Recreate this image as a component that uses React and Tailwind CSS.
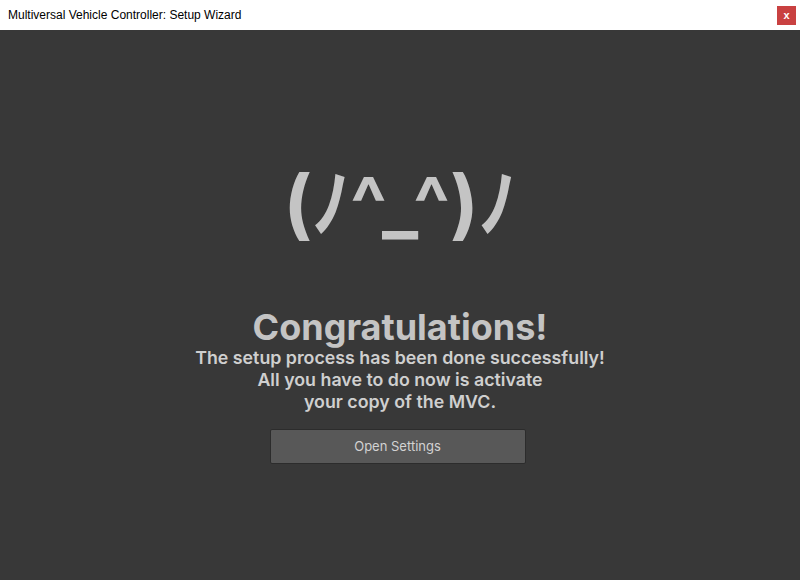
import React from 'react';

export default function App() {
  return (
    <div className="w-[800px] h-[580px] flex flex-col bg-[#383838] overflow-hidden">
      {/* title bar */}
      <div className="h-[30px] bg-white flex items-center justify-between pl-2 pr-1">
        <span className="text-[12px] text-black" style={{ fontFamily: '"Liberation Sans", sans-serif' }}>
          Multiversal Vehicle Controller: Setup Wizard
        </span>
        <div className="w-[19px] h-[19px] bg-[#c94141] flex items-center justify-center text-white text-[11px] font-bold leading-none" style={{ fontFamily: '"Liberation Sans", sans-serif' }}>
          x
        </div>
      </div>

      {/* content */}
      <div className="flex-1 flex flex-col items-center text-[#c4c4c4]" style={{ fontFamily: 'Inter, "Noto Sans CJK JP", sans-serif' }}>
        <div className="mt-[135px] text-[76px] font-bold leading-none">
          (ﾉ^_^)ﾉ
        </div>
        <h1 className="mt-[66px] text-[36px] font-bold leading-[40px]">Congratulations!</h1>
        <p className="text-[17.8px] font-semibold leading-[22px] text-center text-[#cfcfcf]">
          The setup process has been done successfully!
          <br />
          All you have to do now is activate
          <br />
          your copy of the MVC.
        </p>
        <button className="mt-[16px] mr-[5px] w-[256px] h-[35px] bg-[#585858] border border-[#2c2c2c] rounded-[2px] text-[13px] text-[#d2d2d2]">
          Open Settings
        </button>
      </div>
    </div>
  );
}
